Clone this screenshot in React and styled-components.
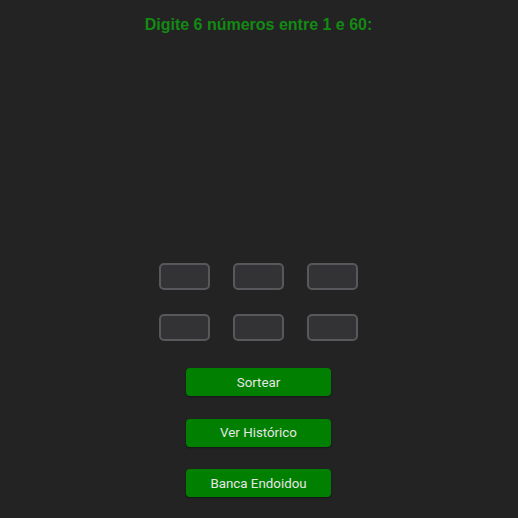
import React from "react";
import styled, { createGlobalStyle } from "styled-components";

const Global = createGlobalStyle`
  html, body { margin: 0; padding: 0; background: #232323; }
  body { font-family: "Liberation Sans", Arial, sans-serif; }
`;

const Page = styled.div`
  width: 517px;
  height: 518px;
  display: flex;
  flex-direction: column;
  align-items: center;
  box-sizing: border-box;
`;

const Title = styled.h1`
  margin: 15px 0 0;
  font-family: "Liberation Sans", Arial, sans-serif;
  font-weight: bold;
  font-size: 16px;
  line-height: 19px;
  color: #138a13;
`;

const Grid = styled.div`
  margin-top: 229px;
  display: grid;
  grid-template-columns: repeat(3, 51px);
  column-gap: 23px;
  row-gap: 24px;
`;

const NumInput = styled.input`
  box-sizing: border-box;
  width: 51px;
  height: 27px;
  border: 2px solid #58585c;
  border-radius: 5px;
  background: #333336;
  color: #ddd;
  outline: none;
  text-align: center;
`;

const Buttons = styled.div`
  margin-top: 27px;
  display: flex;
  flex-direction: column;
  gap: 22.5px;
`;

const Button = styled.button`
  box-sizing: border-box;
  width: 145px;
  height: 28px;
  border: none;
  border-radius: 4px;
  background: #007f00;
  color: #e6e6e6;
  font-family: Roboto, "Liberation Sans", sans-serif;
  font-size: 13.33px;
  box-shadow: 0 1px 2px rgba(0, 0, 0, 0.4);
  cursor: pointer;
`;

export default function App() {
  return (
    <>
      <Global />
      <Page>
        <Title>Digite 6 números entre 1 e 60:</Title>
        <Grid>
          {[0, 1, 2, 3, 4, 5].map((i) => (
            <NumInput key={i} type="text" />
          ))}
        </Grid>
        <Buttons>
          <Button>Sortear</Button>
          <Button>Ver Histórico</Button>
          <Button>Banca Endoidou</Button>
        </Buttons>
      </Page>
    </>
  );
}
